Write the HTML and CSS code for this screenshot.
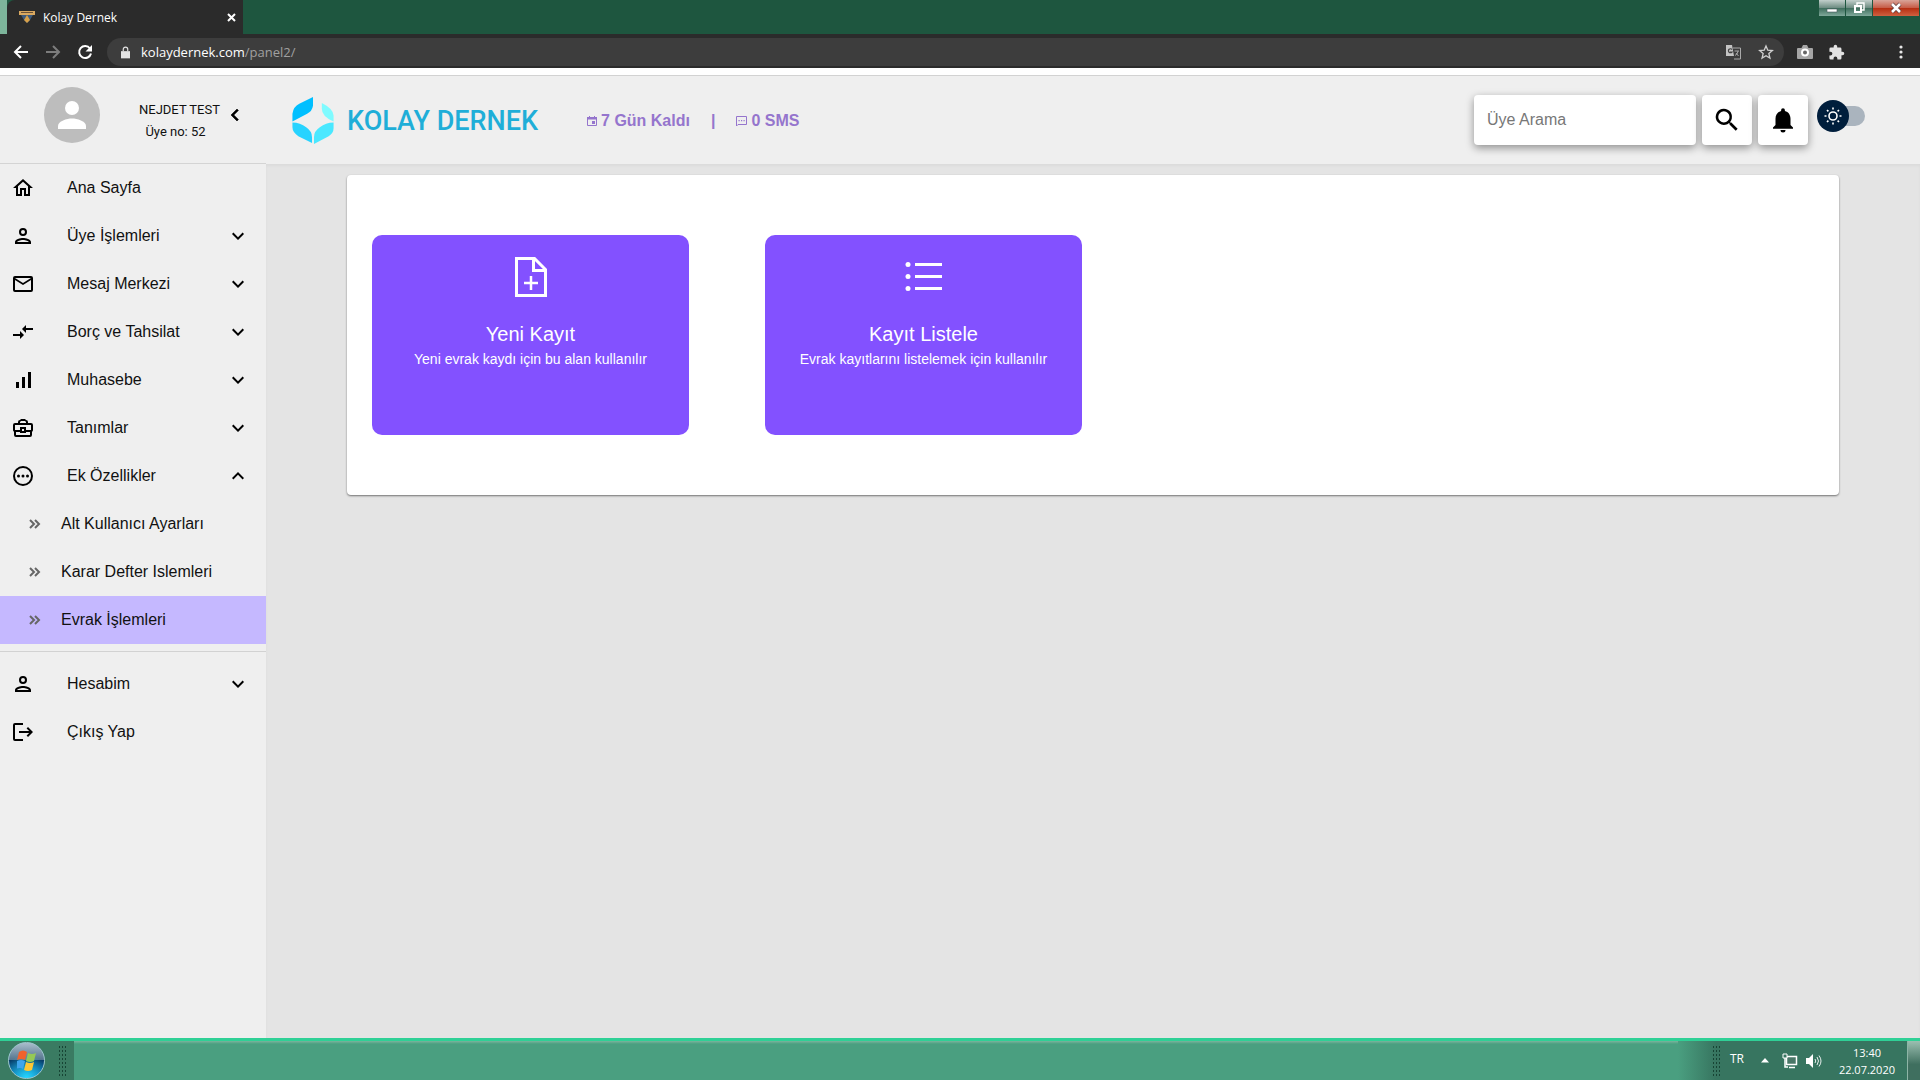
FILE: index.html
```html
<!DOCTYPE html>
<html lang="tr">
<head>
    <meta charset="UTF-8">
    <meta name="viewport" content="width=device-width, initial-scale=1.0">
    <title>Kolay Dernek</title>
    <link rel="stylesheet" href="styles.css">
</head>
<body>
    <!-- Browser window -->
    <div class="tab-bar">
        <div class="tab">
            <svg class="favicon" width="16" height="14" viewBox="0 0 16 14">
                <path d="M0 1h16v4H0z" fill="#d9a860"/>
                <path d="M2 2h12v1H2z" fill="#6b5238"/>
                <path d="M2 5h12l-3 5-3 3-3-3z" fill="#3d5a7c"/>
                <path d="M8 5l3 5-3 3-3-3z" fill="#d8a048"/>
            </svg>
            <span class="tab-title">Kolay Dernek</span>
            <button class="tab-close" aria-label="Sekmeyi kapat">
                <svg width="9" height="9" viewBox="0 0 9 9"><path d="M1 1l7 7M8 1L1 8" stroke="#fff" stroke-width="2"/></svg>
            </button>
        </div>
        <div class="window-buttons">
            <button class="win-btn" aria-label="Küçült">
                <svg width="12" height="12" viewBox="0 0 12 12"><path d="M1 7h10v3H1z" fill="#fff" stroke="#4a5a60" stroke-width=".6"/></svg>
            </button>
            <button class="win-btn" aria-label="Önceki boyut">
                <svg width="12" height="12" viewBox="0 0 12 12"><path d="M4 3V1h7v7H9" fill="none" stroke="#fff" stroke-width="1.4"/><path d="M2 4h6v6H2z" fill="none" stroke="#fff" stroke-width="2"/></svg>
            </button>
            <button class="win-btn win-close" aria-label="Kapat">
                <svg width="12" height="12" viewBox="0 0 12 12"><path d="M2 2l8 8M10 2l-8 8" stroke="#5d3a3a" stroke-width="4"/><path d="M2 2l8 8M10 2l-8 8" stroke="#fff" stroke-width="2.6"/></svg>
            </button>
        </div>
    </div>
    <div class="toolbar">
        <button class="tool" aria-label="Geri">
            <svg width="16" height="16" viewBox="0 0 16 16"><path d="M15 8H2M8 2L2 8l6 6" fill="none" stroke="#fff" stroke-width="2"/></svg>
        </button>
        <button class="tool" aria-label="İleri">
            <svg width="16" height="16" viewBox="0 0 16 16"><path d="M1 8h13M8 2l6 6-6 6" fill="none" stroke="#7d7d7d" stroke-width="2"/></svg>
        </button>
        <button class="tool" aria-label="Yenile">
            <svg width="16" height="16" viewBox="0 0 16 16"><path d="M13 4.500A6 6 0 1 0 14 9.500" fill="none" stroke="#fff" stroke-width="2"/><path d="M15 1v6.500H8.500z" fill="#fff"/></svg>
        </button>
        <div class="address">
            <svg width="9" height="13" viewBox="0 0 10 13"><path d="M0 5h10v8H0z" fill="#e4e4e4"/><path d="M2.500 5V3a2.500 2.500 0 0 1 5 0v2" fill="none" stroke="#e4e4e4" stroke-width="1.300"/></svg>
            <span class="url">kolaydernek.com<span class="url-path">/panel2/</span></span>
            <svg width="15" height="15" viewBox="0 0 15 15"><path d="M0 0h6l2 11H0z" fill="#c4c4c4"/><path d="M7 3h7.500v11H8" fill="none" stroke="#a9a9a9"/><path d="M6 4.500A2 2 0 1 0 6 7H4" fill="none" stroke="#444" stroke-width="1.200"/><path d="M8.500 6h4.500M12 6q0 3-3 4.500M10 8l2.500 3" fill="none" stroke="#a9a9a9"/></svg>
            <svg width="16" height="16" viewBox="0 0 24 24"><path d="M12 3l2.700 6.300 6.800.6-5.200 4.500 1.600 6.600-5.900-3.500L6.100 21l1.600-6.600-5.200-4.500 6.800-.6z" fill="none" stroke="#d0d0d0" stroke-width="2"/></svg>
        </div>
        <div class="extensions">
            <svg width="16" height="14" viewBox="0 0 16 14"><path d="M1 3h3.500L6 0h4l1.500 3H15a1 1 0 0 1 1 1v9a1 1 0 0 1-1 1H1a1 1 0 0 1-1-1V4a1 1 0 0 1 1-1z" fill="#a5a5a5"/><circle cx="8" cy="7.500" r="3" fill="#666" stroke="#fff" stroke-width="2"/></svg>
            <svg width="17" height="17" viewBox="0 0 24 24"><path d="M20.500 11H19V7a2 2 0 0 0-2-2h-4V3.500a2.500 2.500 0 0 0-5 0V5H4a2 2 0 0 0-2 2v3.800h1.500a2.700 2.700 0 0 1 0 5.400H2V20a2 2 0 0 0 2 2h3.800v-1.500a2.700 2.700 0 0 1 5.400 0V22H17a2 2 0 0 0 2-2v-4h1.500a2.500 2.500 0 0 0 0-5z" fill="#e2e2e2"/></svg>
            <svg class="more" width="4" height="14" viewBox="0 0 4 14"><circle cx="2" cy="2" r="1.600" fill="#e8e8e8"/><circle cx="2" cy="7" r="1.600" fill="#e8e8e8"/><circle cx="2" cy="12" r="1.600" fill="#e8e8e8"/></svg>
        </div>
    </div>

    <!-- Panel header -->
    <header class="header">
        <div class="profile">
            <svg class="avatar" width="56" height="56" viewBox="0 0 56 56"><circle cx="28" cy="28" r="28" fill="#bdbdbd"/><circle cx="28" cy="21" r="7" fill="#fff"/><path d="M14 42v-3c0-5 9-7.500 14-7.500s14 2.500 14 7.500v3z" fill="#fff"/></svg>
            <div class="profile-text">
                <p>NEJDET TEST</p>
                <p class="member-no">Üye no: 52</p>
            </div>
            <button class="collapse" aria-label="Menüyü daralt">
                <svg width="24" height="24" viewBox="0 0 24 24"><path d="M15.400 7.400L14 6l-6 6 6 6 1.400-1.400L10.800 12z" fill="#000" stroke="#000" stroke-width=".6"/></svg>
            </button>
        </div>
        <a class="logo" href="#">
            <svg width="42" height="47" viewBox="0 0 42 48">
                <path d="M21 0v9q-1 6-6 8L0 25v-8Q1 10 7 7z" fill="#00bfff"/>
                <path d="M30 6q12 6 12 13v6q-12-5-12-13z" fill="#7ffbff"/>
                <path d="M0 26q8 0 14 5 6 4 6 10v6L6 40q-6-4-6-9z" fill="#27d3ff"/>
                <path d="M42 26v6q0 5-5 8L22 48v-7q0-6 6-10 6-5 14-5z" fill="#4ae8ff"/>
            </svg>
            <span>KOLAY DERNEK</span>
        </a>
        <div class="status">
            <span class="status-item">
                <svg width="10" height="10" viewBox="0 0 10 10"><path d="M.5 1.500h9v8h-9z" fill="none" stroke="#9575cd"/><path d="M0 1h10v2.500H0zM2 0h1v2H2zM7 0h1v2H7zM5 5h3v3H5z" fill="#9575cd"/></svg>
                7 Gün Kaldı
            </span>
            <span class="divider">|</span>
            <span class="status-item">
                <svg width="11" height="11" viewBox="0 0 11 11"><path d="M.5 10V.500h10v8H2z" fill="none" stroke="#9575cd"/><path d="M2.500 4h1.200v1.200H2.500zM5 4h1.200v1.200H5zM7.500 4h1.200v1.200H7.500z" fill="#9575cd"/></svg>
                0 SMS
            </span>
        </div>
        <form class="search">
            <input type="text" placeholder="Üye Arama" aria-label="Üye Arama">
            <button type="button" aria-label="Ara">
                <svg width="30" height="30" viewBox="0 0 24 24"><path d="M15.500 14h-.8l-.3-.3A6.500 6.500 0 1 0 13.700 14.400l.3.300v.8l5 5 1.500-1.500zm-6 0a4.500 4.500 0 1 1 0-9 4.500 4.500 0 0 1 0 9z"/></svg>
            </button>
            <button type="button" aria-label="Bildirimler">
                <svg width="30" height="30" viewBox="0 0 24 24"><path d="M12 22a2 2 0 0 0 2-2h-4a2 2 0 0 0 2 2zm6-6v-5c0-3.100-1.600-5.600-4.500-6.300V4a1.500 1.500 0 0 0-3 0v.7C7.600 5.400 6 7.900 6 11v5l-2 2v1h16v-1z"/></svg>
            </button>
        </form>
        <label class="theme">
            <input type="checkbox" aria-label="Koyu tema">
            <span class="theme-track"></span>
            <span class="theme-thumb">
                <svg width="20" height="20" viewBox="0 0 20 20" fill="none" stroke="#fff"><circle cx="10" cy="10" r="4" stroke-width="1.600"/><path d="M10 1.500v2M10 16.500v2M1.500 10h2M16.500 10h2M4 4l1.400 1.400M14.600 14.600L16 16M4 16l1.400-1.400M14.600 5.400L16 4" stroke-width="1.600"/></svg>
            </span>
        </label>
    </header>

    <div class="layout">
        <nav class="sidebar">
            <a class="menu-item" href="#">
                <svg class="menu-icon" viewBox="0 0 24 24"><path d="M12 5.700l5 4.500V18h-2v-6H9v6H7v-7.800l5-4.500M12 3L2 12h3v8h6v-6h2v6h6v-8h3z"/></svg>
                <span>Ana Sayfa</span>
            </a>
            <a class="menu-item" href="#">
                <svg class="menu-icon" viewBox="0 0 24 24"><path d="M12 6a2 2 0 1 1 0 4 2 2 0 0 1 0-4m0 10c2.700 0 5.800 1.300 6 2H6c.2-.7 3.300-2 6-2m0-12a4 4 0 1 0 0 8 4 4 0 0 0 0-8zm0 10c-2.700 0-8 1.300-8 4v2h16v-2c0-2.700-5.300-4-8-4z"/></svg>
                <span>Üye İşlemleri</span>
                <svg class="arrow" viewBox="0 0 24 24"><path d="M7.400 8.600L12 13.200l4.600-4.600L18 10l-6 6-6-6z"/></svg>
            </a>
            <a class="menu-item" href="#">
                <svg class="menu-icon" viewBox="0 0 24 24"><path d="M22 6a2 2 0 0 0-2-2H4a2 2 0 0 0-2 2v12a2 2 0 0 0 2 2h16a2 2 0 0 0 2-2zm-2 0l-8 5-8-5zm0 12H4V8l8 5 8-5z"/></svg>
                <span>Mesaj Merkezi</span>
                <svg class="arrow" viewBox="0 0 24 24"><path d="M7.400 8.600L12 13.200l4.600-4.600L18 10l-6 6-6-6z"/></svg>
            </a>
            <a class="menu-item" href="#">
                <svg class="menu-icon" viewBox="0 0 24 24"><path d="M9 14H2v2h7v3l4-4-4-4zm6-1v-3h7V8h-7V5l-4 4z"/></svg>
                <span>Borç ve Tahsilat</span>
                <svg class="arrow" viewBox="0 0 24 24"><path d="M7.400 8.600L12 13.200l4.600-4.600L18 10l-6 6-6-6z"/></svg>
            </a>
            <a class="menu-item" href="#">
                <svg class="menu-icon" viewBox="0 0 24 24"><path d="M5 14h3v6H5zM11 9h3v11h-3zM17 4h3v16h-3z"/></svg>
                <span>Muhasebe</span>
                <svg class="arrow" viewBox="0 0 24 24"><path d="M7.400 8.600L12 13.200l4.600-4.600L18 10l-6 6-6-6z"/></svg>
            </a>
            <a class="menu-item" href="#">
                <svg class="menu-icon" viewBox="0 0 24 24"><path d="M20 7h-3V6a2 2 0 0 0-2-2l-1-1h-4L9 4a2 2 0 0 0-2 2v1H4a2 2 0 0 0-2 2v5a2 2 0 0 0 1 1.700V19a2 2 0 0 0 2 2h14a2 2 0 0 0 2-2v-3.300c.6-.3 1-1 1-1.700V9a2 2 0 0 0-2-2zM9 6l1-1h4l1 1v1H9zM4 9h16v5h-5v-3H9v3H4zm9 6h-2v-2h2zm6 4H5v-3h4v1h6v-1h4z"/></svg>
                <span>Tanımlar</span>
                <svg class="arrow" viewBox="0 0 24 24"><path d="M7.400 8.600L12 13.200l4.600-4.600L18 10l-6 6-6-6z"/></svg>
            </a>
            <a class="menu-item" href="#">
                <svg class="menu-icon" viewBox="0 0 24 24"><path d="M12 2a10 10 0 1 0 0 20 10 10 0 0 0 0-20zm0 18a8 8 0 1 1 0-16 8 8 0 0 1 0 16z"/><circle cx="7.500" cy="12" r="1.500"/><circle cx="12" cy="12" r="1.500"/><circle cx="16.500" cy="12" r="1.500"/></svg>
                <span>Ek Özellikler</span>
                <svg class="arrow" viewBox="0 0 24 24"><path d="M12 8l-6 6 1.400 1.400L12 10.800l4.600 4.600L18 14z"/></svg>
            </a>
            <a class="sub-item" href="#">
                <svg class="sub-icon" viewBox="0 0 12 12"><path d="M1 2l4 4-4 4M6 2l4 4-4 4"/></svg>
                <span>Alt Kullanıcı Ayarları</span>
            </a>
            <a class="sub-item" href="#">
                <svg class="sub-icon" viewBox="0 0 12 12"><path d="M1 2l4 4-4 4M6 2l4 4-4 4"/></svg>
                <span>Karar Defter Islemleri</span>
            </a>
            <a class="sub-item active" href="#">
                <svg class="sub-icon" viewBox="0 0 12 12"><path d="M1 2l4 4-4 4M6 2l4 4-4 4"/></svg>
                <span>Evrak İşlemleri</span>
            </a>
            <hr>
            <a class="menu-item" href="#">
                <svg class="menu-icon" viewBox="0 0 24 24"><path d="M12 6a2 2 0 1 1 0 4 2 2 0 0 1 0-4m0 10c2.700 0 5.800 1.300 6 2H6c.2-.7 3.300-2 6-2m0-12a4 4 0 1 0 0 8 4 4 0 0 0 0-8zm0 10c-2.700 0-8 1.300-8 4v2h16v-2c0-2.700-5.300-4-8-4z"/></svg>
                <span>Hesabim</span>
                <svg class="arrow" viewBox="0 0 24 24"><path d="M7.400 8.600L12 13.200l4.600-4.600L18 10l-6 6-6-6z"/></svg>
            </a>
            <a class="menu-item" href="#">
                <svg class="menu-icon" viewBox="0 0 24 24"><path d="M12 3H4a2 2 0 0 0-2 2v14a2 2 0 0 0 2 2h8v-2H4V5h8zM17 7l-1.400 1.400 2.600 2.600H8v2h10.200l-2.600 2.600L17 17l5-5z"/></svg>
                <span>Çıkış Yap</span>
            </a>
        </nav>

        <main class="content">
            <section class="card">
                <a class="tile" href="#">
                    <svg width="48" height="48" viewBox="0 0 48 48" fill="none" stroke="#fff" stroke-width="3"><path d="M9.500 5.500h18l11 11v26h-29z"/><path d="M26.500 6v11.500H38"/><path d="M24 23v14M17 30h14" stroke-width="2.500"/></svg>
                    <h2>Yeni Kayıt</h2>
                    <p>Yeni evrak kaydı için bu alan kullanılır</p>
                </a>
                <a class="tile" href="#">
                    <svg width="48" height="48" viewBox="0 0 48 48" fill="#fff"><path d="M15 10h27v3H15zM15 22h27v3H15zM15 34h27v3H15z"/><circle cx="8" cy="11.500" r="2.500"/><circle cx="8" cy="23.500" r="2.500"/><circle cx="8" cy="35.500" r="2.500"/></svg>
                    <h2>Kayıt Listele</h2>
                    <p>Evrak kayıtlarını listelemek için kullanılır</p>
                </a>
            </section>
        </main>
    </div>

    <!-- Windows taskbar -->
    <footer class="taskbar">
        <div class="start">
            <button class="orb" aria-label="Başlat">
                <svg width="20" height="22" viewBox="0 0 20 22"><path d="M2 2q4-3 8 0L8 10q-4-2-8 0z" fill="#f0622d"/><path d="M11 3q4 2 8 0l-2 8q-4 2-8 0z" fill="#95c955"/><path d="M0 11q4-2 8 0l-2 8q-3-2-7 0z" fill="#3fa5ec"/><path d="M9 12q4 2 8 0l-2 8q-4 2-8 0z" fill="#fdc733"/></svg>
            </button>
            <span class="grip"></span>
        </div>
        <div class="tray">
            <span class="grip"></span>
            <span class="lang">TR</span>
            <svg class="tray-up" width="8" height="5" viewBox="0 0 8 5"><path d="M4 0l4 4.500H0z" fill="#fff"/></svg>
            <svg class="tray-net" width="16" height="16" viewBox="0 0 16 16"><path d="M4.500 3.500h10v8h-10z" fill="#4a7768" stroke="#fff" stroke-width="1.500"/><path d="M7 14.500h6M3 5v9h3" fill="none" stroke="#fff" stroke-width="1.500"/><path d="M1 1h4v4H1z" fill="#377560" stroke="#fff"/></svg>
            <svg class="tray-sound" width="16" height="14" viewBox="0 0 16 14"><path d="M0 4h3l4-4v14l-4-4H0z" fill="#fff"/><path d="M9 5q1.500 2 0 4M11 3q3 4 0 8M13 1.500q4 5.500 0 11" fill="none" stroke="#e7efec"/></svg>
            <div class="clock">
                <span>13:40</span>
                <span>22.07.2020</span>
            </div>
            <button class="show-desktop" aria-label="Masaüstünü göster"></button>
        </div>
    </footer>
</body>
</html>
```
FILE: styles.css
```css
* {
    box-sizing: border-box;
}

body {
    display: flex;
    flex-direction: column;
    min-height: 100vh;
    margin: 0;
    background-color: #e4e4e4;
    color: #111;
    font-family: "Liberation Sans", Arial, sans-serif;
    font-size: 16px;
}

a {
    color: inherit;
    text-decoration: none;
}

button {
    border: none;
    padding: 0;
    background: none;
    cursor: pointer;
}

svg {
    flex-shrink: 0;
}

/* Browser tab bar */
.tab-bar {
    display: flex;
    justify-content: space-between;
    align-items: flex-start;
    height: 34px;
    padding-left: 7px;
    background: linear-gradient(to right, #7db59b 7px, #1e563f 7px);
    font-family: "Open Sans", sans-serif;
}

.tab {
    display: flex;
    align-items: center;
    width: 236px;
    height: 34px;
    padding: 0 7px 0 12px;
    border-radius: 8px 0 0 0;
    background-color: #2b2b2b;
    color: #fff;
    font-size: 12px;
}

.tab-title {
    flex: 1;
    margin-left: 8px;
}

.tab-close {
    display: flex;
}

.window-buttons {
    display: flex;
    gap: 1px;
    height: 16px;
    padding-right: 1px;
}

.win-btn {
    display: flex;
    justify-content: center;
    align-items: center;
    width: 26px;
    background: linear-gradient(#c2cfcb, #6b8b80 50%, #3d6c5b 50%, #80a99b);
}

.win-close {
    width: 46px;
    background: linear-gradient(#d9a499, #c65a45 50%, #b52c10 50%, #cf6040);
}

/* Address bar */
.toolbar {
    display: flex;
    align-items: center;
    height: 34px;
    padding: 2px 17px 0 13px;
    background-color: #2b2b2b;
}

.tool {
    display: flex;
    margin-right: 16px;
}

.address {
    display: flex;
    flex: 1;
    align-items: center;
    gap: 17px;
    height: 28px;
    margin: 0 13px 0 -2px;
    padding: 0 10px 0 14px;
    border-radius: 14px;
    background-color: #3d3d3d;
}

.url {
    flex: 1;
    margin-left: -6px;
    color: #fff;
    font-family: "Open Sans", sans-serif;
    font-size: 13px;
}

.url-path {
    color: #a0a0a0;
}

.extensions {
    display: flex;
    align-items: center;
    gap: 15px;
}

.more {
    margin-left: 39px;
}

/* Panel header */
.header {
    display: flex;
    height: 96px;
    border-top: 7px solid #fff;
    background-color: #efefef;
    box-shadow: inset 0 1px 0 #d2d2d2;
}

.profile {
    display: flex;
    align-items: center;
    width: 266px;
    padding: 0 19px 8px 44px;
    border-bottom: 1px solid #d4d4d4;
    font-family: Roboto, sans-serif;
    font-size: 13px;
    line-height: 22px;
    text-align: center;
}

.profile-text {
    flex: 1;
    margin: 12px 0 0 36px;
}

.profile-text p {
    margin: 0;
}

.profile-text .member-no {
    padding-right: 8px;
}

.collapse {
    display: flex;
}

.logo {
    display: flex;
    align-items: center;
    gap: 13px;
    margin-left: 26px;
    padding-top: 2px;
    color: #1faed8;
    font-family: Roboto, sans-serif;
    font-size: 27px;
    font-weight: 500;
}

.status {
    display: flex;
    align-items: center;
    gap: 21px;
    margin-left: 49px;
    padding-top: 3px;
    color: #9575cd;
    font-weight: bold;
}

.status-item {
    display: flex;
    align-items: center;
    gap: 4px;
}

.search {
    display: flex;
    gap: 6px;
    margin: 20px 0 0 auto;
}

.search input,
.search button {
    height: 50px;
    border: none;
    border-radius: 4px;
    background-color: #fff;
    box-shadow: 0 3px 8px rgba(0, 0, 0, 0.4);
}

.search input {
    width: 222px;
    padding: 0 13px;
    font-family: inherit;
    font-size: 16px;
}

.search input::placeholder {
    color: #777;
}

.search button {
    display: flex;
    justify-content: center;
    align-items: center;
    width: 50px;
}

/* Light / dark switch */
.theme {
    position: relative;
    width: 48px;
    height: 32px;
    margin: 25px 55px 0 9px;
    cursor: pointer;
}

.theme input {
    position: absolute;
    width: 100%;
    height: 100%;
    margin: 0;
    opacity: 0;
}

.theme-track {
    position: absolute;
    top: 6px;
    right: 0;
    width: 40px;
    height: 20px;
    border-radius: 10px;
    background-color: #aab4be;
}

.theme-thumb {
    position: absolute;
    top: 0;
    left: 0;
    display: flex;
    justify-content: center;
    align-items: center;
    width: 32px;
    height: 32px;
    border-radius: 50%;
    background-color: #001e3c;
}

/* Sidebar and content */
.layout {
    display: flex;
    flex: 1;
}

.sidebar {
    width: 266px;
    background-color: #efefef;
}

.menu-item,
.sub-item {
    display: flex;
    align-items: center;
    height: 48px;
}

.menu-item {
    padding: 0 16px 0 11px;
}

.menu-item span {
    flex: 1;
    margin-left: 32px;
}

.menu-icon,
.arrow {
    width: 24px;
    height: 24px;
}

.sub-item {
    gap: 20px;
    padding-left: 29px;
}

.sub-icon {
    width: 12px;
    height: 12px;
    fill: none;
    stroke: #666;
    stroke-width: 2;
}

.active {
    background-color: #c5b8ff;
}

.sidebar hr {
    margin: 7px 0 8px;
    border: none;
    border-top: 1px solid #d2d2d2;
}

.content {
    flex: 1;
    padding: 11px 81px;
    box-shadow: inset 0 2px 3px rgba(0, 0, 0, 0.04);
}

.card {
    display: flex;
    gap: 76px;
    padding: 60px 25px;
    border-radius: 4px;
    background-color: #fff;
    box-shadow: 0 1px 2px rgba(0, 0, 0, 0.5);
}

.tile {
    width: 317px;
    height: 200px;
    padding-top: 18px;
    border-radius: 10px;
    background-color: #8351ff;
    color: #fff;
    text-align: center;
}

.tile h2 {
    margin: 17px 0 0;
    font-size: 20px;
    font-weight: normal;
    line-height: 24px;
}

.tile p {
    margin: 4px 0 0;
    font-size: 14px;
    line-height: 18px;
}

/* Taskbar */
.taskbar {
    display: flex;
    justify-content: space-between;
    height: 42px;
    border-top: 3px solid #2fd096;
    background: linear-gradient(#7bb49d, #4a9f80 3px, #4a9f80);
    color: #fff;
    font-family: "Open Sans", sans-serif;
    font-size: 12px;
}

.start {
    display: flex;
    align-items: center;
    gap: 13px;
    width: 74px;
    padding-left: 8px;
    background-color: #3a7b62;
}

.orb {
    display: flex;
    justify-content: center;
    align-items: center;
    width: 37px;
    height: 37px;
    border: 1px solid #9cc5cd;
    border-radius: 50%;
    background: radial-gradient(circle at 50% 100%, #25d7ff, transparent 60%), linear-gradient(#a9bccb, #55758e 48%, #073d6a 50%, #0b70b0);
}

.grip {
    width: 10px;
    height: 32px;
    background: radial-gradient(circle, #174434 1px, transparent 1px) 0 0 / 3px 4px;
}

.tray {
    display: flex;
    align-items: center;
    padding-left: 34px;
    background: linear-gradient(to right, #4a9f80, #377560 38px);
}

.lang {
    margin: 0 17px 4px 8px;
}

.tray-net {
    margin-left: 13px;
}

.tray-sound {
    margin-left: 8px;
}

.clock {
    display: flex;
    flex-direction: column;
    margin: 0 12px 0 17px;
    font-size: 11px;
    line-height: 17px;
    text-align: center;
}

.show-desktop {
    align-self: stretch;
    width: 13px;
    border-left: 1px solid #8eb5a7;
    background: linear-gradient(#9bbfb1, #3f6f5f 60%);
}
```
